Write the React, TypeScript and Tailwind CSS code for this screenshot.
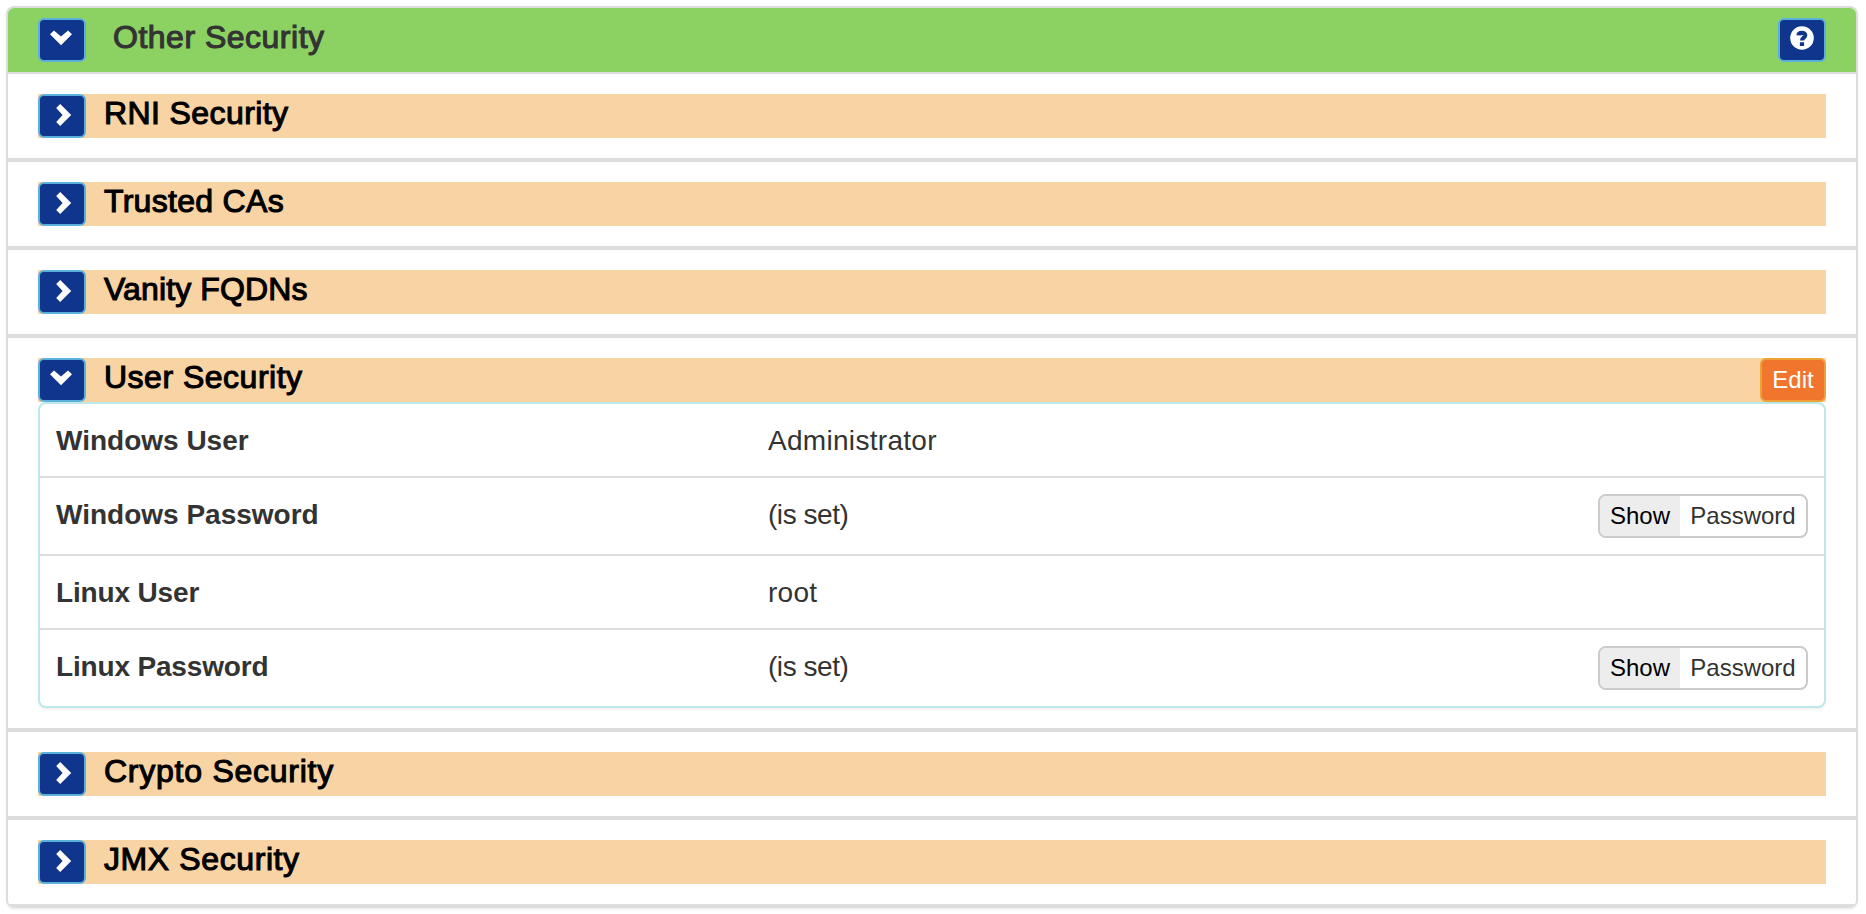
import type { ReactNode } from "react";

function IconButton({ children, label }: { children: ReactNode; label: string }) {
  return (
    <button
      aria-label={label}
      className="flex h-11 w-12 shrink-0 items-center justify-center rounded-md border-2 border-[#5bb0dc] bg-[#0f368c]"
    >
      {children}
    </button>
  );
}

function ChevronDown() {
  return (
    <svg width="44" height="40" viewBox="0 0 44 40" fill="#fff">
      <path d="M10 14.2 14 10.4 21 16.6 28 10.4 32 14.2 21 25.2Z" />
    </svg>
  );
}

function ChevronRight() {
  return (
    <svg width="44" height="40" viewBox="0 0 44 40" fill="#fff">
      <path d="M20.2 8 31.2 19 20.2 30 16.2 26 22.6 19 16.2 12Z" />
    </svg>
  );
}

function Help() {
  return (
    <svg width="44" height="40" viewBox="0 0 44 40">
      <circle cx="22" cy="18" r="11.8" fill="#fff" />
      <path d="M18.5 15.4C18.6 12.2 25.4 12 25.2 15.4 25 17.8 22 17.6 22 20.6" fill="none" stroke="#0f368c" strokeWidth="4.2" />
      <path d="M19.9 22.2h4.2v3.8h-4.2z" fill="#0f368c" />
    </svg>
  );
}

const titleFont = "text-[32px] leading-[38px] whitespace-nowrap [-webkit-text-stroke:1.1px_currentColor]";

function Section({ title, spacing, open, children }: { title: string; spacing: string; open?: boolean; children?: ReactNode }) {
  return (
    <section className="border-b-4 border-[#ddd] px-[30px] py-5">
      <div className="flex h-11 bg-[#f8d3a4]">
        <IconButton label={title}>{open ? <ChevronDown /> : <ChevronRight />}</IconButton>
        <h2 className={`ml-[18px] grow text-black ${titleFont} ${spacing}`}>{title}</h2>
        {open && (
          <button className="h-11 w-[66px] rounded-md border-2 border-[#eea236] bg-[#f0762e] text-2xl leading-10 text-white">
            Edit
          </button>
        )}
      </div>
      {children}
    </section>
  );
}

type Field = { name: string; value: string; secret?: boolean; nameSpacing: string; valueSpacing: string };

const fields: Field[] = [
  { name: "Windows User", value: "Administrator", nameSpacing: "tracking-[0px]", valueSpacing: "tracking-[0.3px]" },
  { name: "Windows Password", value: "(is set)", secret: true, nameSpacing: "tracking-[0px]", valueSpacing: "tracking-[-0.45px]" },
  { name: "Linux User", value: "root", nameSpacing: "tracking-[-0.15px]", valueSpacing: "tracking-[0.3px]" },
  { name: "Linux Password", value: "(is set)", secret: true, nameSpacing: "tracking-[-0.17px]", valueSpacing: "tracking-[-0.45px]" },
];

function FieldRow({ field }: { field: Field }) {
  return (
    <div
      className={`flex items-start border-b-2 border-[#ddd] px-4 pt-4 text-[28px] text-[#333] last:border-b-0 ${
        field.secret ? "h-[78px] last:h-[76px]" : "h-[74px]"
      }`}
    >
      <div className={`w-[712px] leading-[42px] font-bold ${field.nameSpacing}`}>{field.name}</div>
      <div className={`grow leading-[42px] ${field.valueSpacing}`}>{field.value}</div>
      {field.secret && (
        <button className="flex h-11 w-[210px] overflow-hidden rounded-lg border-2 border-[#ccc] bg-white text-2xl leading-10">
          <span className="w-20 bg-[#ededed] text-center text-black">Show</span>
          <span className="grow text-center">Password</span>
        </button>
      )}
    </div>
  );
}

export default function App() {
  return (
    <div className="h-[914px] overflow-hidden bg-white pt-1.5 pr-2 pl-1.5 font-['Liberation_Sans',Arial,sans-serif]">
      <main className="overflow-hidden rounded-lg border-2 border-b-0 border-[#ddd] shadow-[0_2px_2px_rgba(0,0,0,0.05)]">
        <header className="flex h-[66px] items-start border-b-2 border-[#ddd] bg-[#8cd263] px-[30px] pt-2.5">
          <IconButton label="Other Security"><ChevronDown /></IconButton>
          <h1 className={`ml-[27px] grow tracking-[0.5px] text-[#333] ${titleFont}`}>Other Security</h1>
          <IconButton label="Help"><Help /></IconButton>
        </header>
        <Section title="RNI Security" spacing="tracking-[0.4px]" />
        <Section title="Trusted CAs" spacing="tracking-[0.3px]" />
        <Section title="Vanity FQDNs" spacing="tracking-[0.12px]" />
        <Section title="User Security" spacing="tracking-[0.5px]" open>
          <div className="rounded-lg border-2 border-[#bce8e8] shadow-[0_2px_2px_rgba(0,0,0,0.05)]">
            {fields.map((f) => (
              <FieldRow key={f.name} field={f} />
            ))}
          </div>
        </Section>
        <Section title="Crypto Security" spacing="tracking-[0.75px]" />
        <Section title="JMX Security" spacing="tracking-[0.6px]" />
      </main>
    </div>
  );
}
